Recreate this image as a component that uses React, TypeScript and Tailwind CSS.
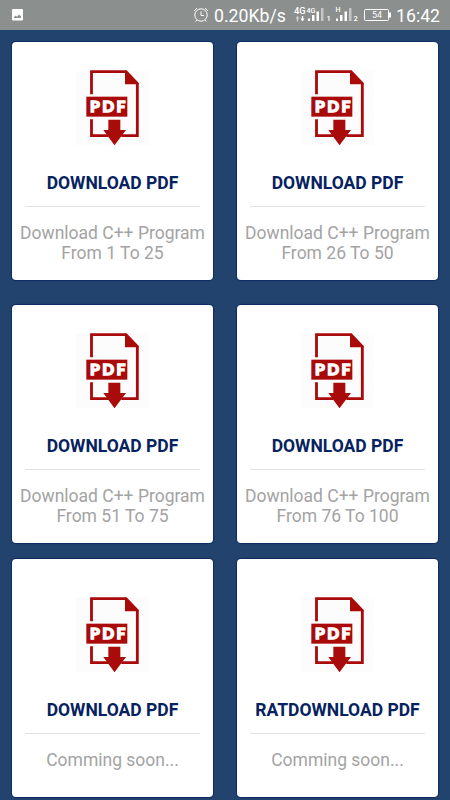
type Item = { title: string; lines: string[] };

const rows: { items: Item[]; gap: string }[] = [
  {
    gap: "mt-3",
    items: [
      { title: "DOWNLOAD PDF", lines: ["Download C++ Program", "From 1 To 25"] },
      { title: "DOWNLOAD PDF", lines: ["Download C++ Program", "From 26 To 50"] },
    ],
  },
  {
    gap: "mt-[25px]",
    items: [
      { title: "DOWNLOAD PDF", lines: ["Download C++ Program", "From 51 To 75"] },
      { title: "DOWNLOAD PDF", lines: ["Download C++ Program", "From 76 To 100"] },
    ],
  },
  {
    gap: "mt-[15.5px]",
    items: [
      { title: "DOWNLOAD PDF", lines: ["Comming soon..."] },
      { title: "RATDOWNLOAD PDF", lines: ["Comming soon..."] },
    ],
  },
];

function PdfIcon() {
  return (
    <svg viewBox="15 30 225 228" className="h-[76px] w-[75px] shrink-0">
      <defs>
        <pattern id="hatch" width="9" height="9" patternUnits="userSpaceOnUse">
          <rect width="9" height="9" fill="#fefefe" />
          <path d="M0 0L9 9" stroke="#f5f5f5" strokeWidth="2" />
        </pattern>
      </defs>
      <rect x="18" y="32" width="220" height="223" fill="url(#hatch)" />
      <path d="M64.5 103V35H168L202 71V227H154M115 227H64.5V178" fill="none" stroke="#a90a0a" strokeWidth="8.5" />
      <path d="M165 31L206 70V73H165Z" fill="#a90a0a" />
      <rect x="49" y="110" width="123" height="60" fill="#a90a0a" />
      <path d="M115 179H151V210H168L133.500 256L100 210H115Z" fill="#a90a0a" />
      <text
        x="60"
        y="157"
        textLength="106"
        fill="#fff"
        stroke="#fff"
        strokeWidth="4"
        className="font-[Lato,sans-serif] text-[47px] font-black"
      >
        PDF
      </text>
    </svg>
  );
}

function Card({ title, lines }: Item) {
  return (
    <div className="flex h-[238px] w-[201px] flex-col items-center justify-center rounded-[4px] bg-white pt-3 shadow-[0_0_1px_1px_#102b60]">
      <PdfIcon />
      <div className="mt-[27px] text-[17.5px] leading-5 font-bold whitespace-nowrap text-[#062260]">{title}</div>
      <div className="mt-[13.25px] h-px w-[175px] shrink-0 bg-[#e2e2e2]" />
      <div className="mt-[15.5px] text-center text-[17.5px] leading-[20.5px] whitespace-nowrap text-[#a3a3a3]">
        {lines.map((line) => (
          <div key={line}>{line}</div>
        ))}
      </div>
    </div>
  );
}

function StatusBar() {
  return (
    <header className="flex h-[30px] items-center bg-[#8b8f8e] text-white">
      <svg viewBox="0 0 12 12" className="ml-[12px] h-3 w-3">
        <rect x="0" y="0" width="11" height="11.500" rx="1" fill="#fff" />
        <path d="M2 9V8L4 6.500L5 8L7 5.500L9 7.500V9Z" fill="#8b8f8e" />
      </svg>
      <svg viewBox="0 0 16 16" className="ml-[169px] h-4 w-4" fill="none" stroke="#fff" strokeWidth="1">
        <circle cx="8" cy="8" r="6.200" />
        <path d="M8 4.500V8.500H11M1 4L4 1.200M12 1.200L15 4M4 13L2.500 14.500M12 13L13.500 14.500" />
      </svg>
      <span className="ml-[5px] w-[72px] pt-px text-[17.7px] leading-[30px] whitespace-nowrap">0.20Kb/s</span>
      <svg viewBox="0 0 105 30" className="ml-[8px] h-[30px] w-[105px] font-[Roboto,sans-serif]" fill="#fff">
        <text x="0" y="14" fontSize="9" fontWeight="500" textLength="11.500" lengthAdjust="spacingAndGlyphs">4G</text>
        <text x="12.500" y="13" fontSize="8" fontWeight="500" textLength="9" lengthAdjust="spacingAndGlyphs">4G</text>
        <path d="M3.500 16L5.500 18.500H4.200V21.500H2.800V18.500H1.500Z" opacity=".6" />
        <path d="M8.500 21.500L6.500 18.500H7.800V16H9.200V18.500H10.500Z" />
        <path d="M14 18.500h2v2.500h-2zM18 15h2.500v6h-2.500zM22.500 11.500h2.500v9.500h-2.500z" />
        <path d="M27 8h2.500v13H27z" opacity=".5" />
        <text x="32.500" y="21" fontSize="7.500" fontWeight="500">1</text>
        <text x="41.500" y="12" fontSize="7" fontWeight="500">H</text>
        <path d="M42 18.500h2v2.500h-2zM46 15h2.500v6h-2.500zM50.500 11.500h2.500v9.500h-2.500z" />
        <path d="M55 8h2.500v13h-2.500z" opacity=".5" />
        <text x="59.500" y="21" fontSize="7.500" fontWeight="500">2</text>
        <rect x="70.500" y="9.500" width="24" height="11" rx="1" fill="none" stroke="#fff" />
        <rect x="95" y="12.500" width="2" height="5" />
        <text x="78" y="18.300" fontSize="9" textLength="10" lengthAdjust="spacingAndGlyphs">54</text>
      </svg>
      <span className="-ml-[3px] pt-px text-[17.7px] leading-[30px]">16:42</span>
    </header>
  );
}

export default function App() {
  return (
    <div className="h-[800px] w-[450px] overflow-hidden bg-[#21436d] font-[Roboto,sans-serif]">
      <StatusBar />
      <main>
        {rows.map((row, i) => (
          <section key={i} className={`flex gap-6 pl-3 ${row.gap}`}>
            {row.items.map((item, j) => (
              <Card key={j} {...item} />
            ))}
          </section>
        ))}
      </main>
    </div>
  );
}
